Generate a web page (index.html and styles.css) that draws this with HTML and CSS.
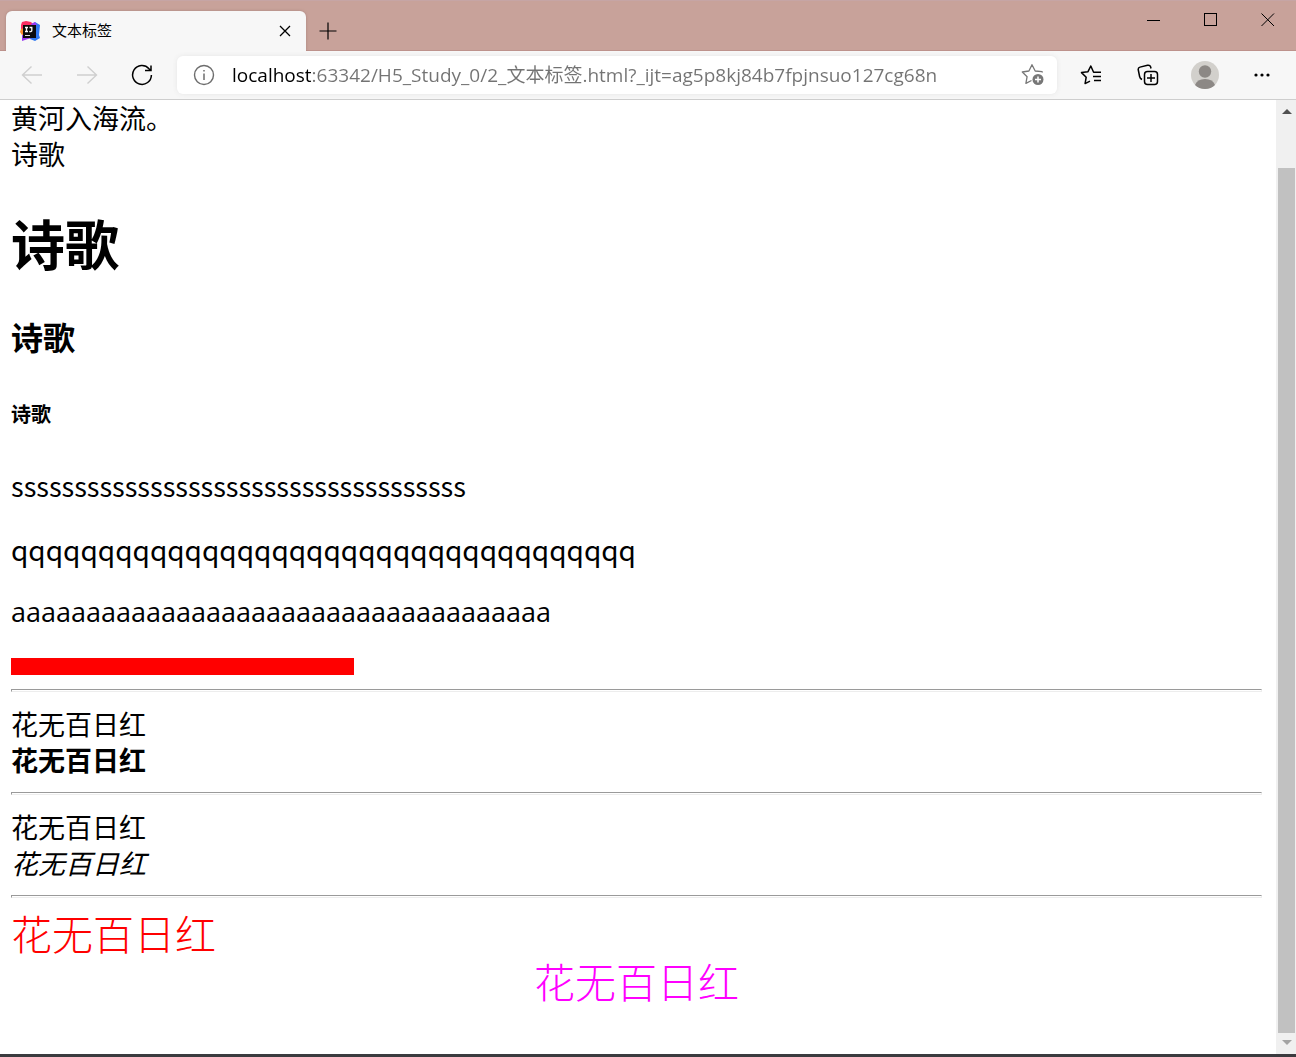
FILE: index.html
```html
<!DOCTYPE html>
<html lang="zh-CN">
<head>
  <meta charset="UTF-8">
  <meta name="viewport" content="width=device-width, initial-scale=1.0">
  <title>文本标签</title>
  <link rel="stylesheet" href="styles.css">
</head>
<body>
  <header class="titlebar">
    <div class="tab">
      <svg class="favicon" width="20" height="20" viewBox="0 0 20 20">
        <path fill="#fc2d61" d="M2 1 L6 0 L11 1 L13 3 L10 10 L1 8 L1 4 Z"/>
        <path fill="#fb8a2b" d="M1 8 L4 7 L5 13 L2 14 L0 11 Z"/>
        <path fill="#3079f0" d="M12 3 L15 1 L20 4 L19 14 L20 17 L15 20 L10 18 Z"/>
        <path fill="#9a3cf0" d="M11 3 L15 1 L17 4 L12 6 Z M2 14 L8 15 L12 17 L8 18 L2 20 Z"/>
        <rect x="3" y="4" width="13" height="13" fill="#0b0b0b"/>
        <path fill="none" stroke="#fff" stroke-width="1.3" d="M5 6.5 h3 M6.5 6.5 v4 M5 10.500 h3 M9.500 6.500 h2.300 v3 q0 1.300 -2.500 1"/>
        <path stroke="#ddd" d="M5 14.500 h5"/>
      </svg>
      <span class="tab-title">文本标签</span>
      <button class="tab-close" aria-label="关闭标签页">
        <svg width="12" height="12" viewBox="0 0 12 12"><path d="M1 1 L11 11 M11 1 L1 11" stroke-width="1.3"/></svg>
      </button>
    </div>
    <button class="new-tab" aria-label="新建标签页">
      <svg width="18" height="18" viewBox="0 0 18 18"><path d="M9 0.500 V17.500 M0.500 9 H17.500" stroke-width="1.2"/></svg>
    </button>
    <div class="window-buttons">
      <button aria-label="最小化">
        <svg width="14" height="14" viewBox="0 0 14 14"><path d="M0 7.500 H13"/></svg>
      </button>
      <button aria-label="最大化">
        <svg width="14" height="14" viewBox="0 0 14 14"><rect x="0.500" y="0.500" width="12" height="12"/></svg>
      </button>
      <button aria-label="关闭">
        <svg width="14" height="14" viewBox="0 0 14 14"><path d="M0.500 0.500 L13 13 M13 0.500 L0.500 13"/></svg>
      </button>
    </div>
  </header>

  <nav class="toolbar">
    <div class="nav-buttons">
      <button class="off" aria-label="后退">
        <svg width="22" height="20" viewBox="0 0 22 20"><path d="M21 10 H1.500 M10.500 1.500 L1.500 10 L10.500 18.500" stroke-width="1.4"/></svg>
      </button>
      <button class="off" aria-label="前进">
        <svg width="22" height="20" viewBox="0 0 22 20"><path d="M1 10 H20.500 M11.500 1.500 L20.500 10 L11.500 18.500" stroke-width="1.4"/></svg>
      </button>
      <button aria-label="刷新">
        <svg width="22" height="22" viewBox="0 0 22 22"><path d="M20.400 11 A9.400 9.400 0 1 1 18 4.700 L19.500 6.200 M20 1.500 V6.500 H14" stroke-width="1.5"/></svg>
      </button>
    </div>
    <div class="address">
      <svg class="info" width="22" height="22" viewBox="0 0 22 22"><circle cx="11" cy="11" r="9.500" stroke-width="1.4"/><path d="M11 9.500 V16 M11 6 V7.500" stroke-width="1.5"/></svg>
      <input type="text" aria-label="地址" value="localhost:63342/H5_Study_0/2_文本标签.html?_ijt=ag5p8kj84b7fpjnsuo127cg68n">
      <button class="favorite" aria-label="添加到收藏夹">
        <svg width="24" height="24" viewBox="0 0 24 24">
          <path d="M21.500 9.500 L21 8.600 L14.200 8 L11 1.700 L7.900 8 L1.300 9 L6.100 13.700 L4.900 20.300 L10.500 17.500" stroke-width="1.3" stroke-linejoin="round"/>
          <circle class="plus-dot" cx="17" cy="16.500" r="5.500"/>
          <path class="plus" d="M17 13.500 V19.500 M14 16.500 H20"/>
        </svg>
      </button>
    </div>
    <div class="tools">
      <button aria-label="收藏夹">
        <svg width="22" height="22" viewBox="0 0 22 22"><path d="M21 8.200 H13.600 L10.800 2 L8 7.700 L1.500 8.600 L6.200 13.200 L5.100 19.600 L10 17.200 M13 12.500 H21 M14 16.500 H21" stroke-width="1.5" stroke-linejoin="round"/></svg>
      </button>
      <button aria-label="集锦">
        <svg width="22" height="22" viewBox="0 0 22 22"><path d="M5 15.500 Q3 14.500 2.600 12.500 L1.300 6 Q0.800 3.800 3 3.100 L10.500 1.300 Q13 0.800 13.700 3 L14 4.500" stroke-width="1.5"/><rect x="7.500" y="7.500" width="13" height="13" rx="3" stroke-width="1.5"/><path d="M14 10 V18 M10 14 H18" stroke-width="1.5"/></svg>
      </button>
      <button aria-label="个人资料">
        <svg width="28" height="28" viewBox="0 0 28 28"><circle class="avatar-bg" cx="14" cy="14" r="14"/><circle class="avatar" cx="14" cy="10.500" r="6.200"/><path class="avatar" d="M4 24 Q6 18 14 18 Q22 18 24 24 Q20 28 14 28 Q8 28 4 24 Z"/></svg>
      </button>
      <button aria-label="设置及其他">
        <svg width="18" height="18" viewBox="0 0 18 18"><circle class="dot" cx="3" cy="9" r="1.600"/><circle class="dot" cx="9" cy="9" r="1.600"/><circle class="dot" cx="15" cy="9" r="1.600"/></svg>
      </button>
    </div>
  </nav>

  <div class="viewport">
    <main class="page">
      <div>黄河入海流。</div>
      <div>诗歌</div>
      <h1>诗歌</h1>
      <h3>诗歌</h3>
      <h5>诗歌</h5>
      <p>ssssssssssssssssssssssssssssssssssss</p>
      <p class="large">qqqqqqqqqqqqqqqqqqqqqqqqqqqqqqqqqqqq</p>
      <p class="narrow">aaaaaaaaaaaaaaaaaaaaaaaaaaaaaaaaaaaa</p>
      <hr class="red-line">
      <hr>
      <div>花无百日红</div>
      <b>花无百日红</b>
      <hr>
      <div>花无百日红</div>
      <i>花无百日红</i>
      <hr>
      <div class="kai">花无百日红</div>
      <div class="song">花无百日红</div>
    </main>
    <div class="scrollbar">
      <svg width="10" height="5" viewBox="0 0 10 5"><path fill="#505050" d="M5 0 L10 5 H0 Z"/></svg>
      <div class="thumb"></div>
      <svg width="10" height="5" viewBox="0 0 10 5"><path fill="#a3a3a3" d="M0 0 H10 L5 5 Z"/></svg>
    </div>
  </div>
</body>
</html>
```
FILE: styles.css
```css
* {
  box-sizing: border-box;
}
body {
  margin: 0;
  min-height: 100vh;
  display: flex;
  flex-direction: column;
  background-color: white;
  border-bottom: 3px solid #3b3b3f;
  font-family: "Noto Sans CJK SC", sans-serif;
  color: black;
}
button {
  display: flex;
  align-items: center;
  justify-content: center;
  padding: 0;
  border: none;
  background: none;
}
svg {
  display: block;
  flex-shrink: 0;
}
button svg,
.info {
  fill: none;
  stroke: black;
}

/* title bar */
.titlebar {
  display: flex;
  flex-shrink: 0;
  height: 51px;
  padding-left: 6px;
  background-color: #c8a29a;
  border-top: 1px solid #c6a5a5;
  box-shadow: inset 0 -1px #bd928c;
}
.tab {
  display: flex;
  align-items: center;
  width: 300px;
  height: 40px;
  margin-top: 10px;
  padding: 0 12px 0 14px;
  background-color: #f7f7f7;
  border-radius: 6px 6px 0 0;
  box-shadow: 0 0 3px #a8827c;
}
.tab-title {
  flex: 1;
  margin-left: 12px;
  padding-bottom: 4px;
  font-size: 15px;
}
.tab-close {
  width: 18px;
  height: 18px;
}
.new-tab {
  width: 44px;
  height: 40px;
  margin-top: 10px;
}
.window-buttons {
  display: flex;
  margin-left: auto;
}
.window-buttons button {
  width: 57px;
  height: 38px;
}

/* toolbar */
.toolbar {
  display: flex;
  align-items: center;
  flex-shrink: 0;
  height: 49px;
  background-color: #f7f7f7;
  border-bottom: 1px solid #cecece;
}
.nav-buttons {
  display: flex;
  width: 177px;
  padding-left: 4px;
}
.nav-buttons button {
  width: 55px;
  height: 40px;
}
.off svg {
  stroke: #cfcfcf;
}
.address {
  display: flex;
  align-items: center;
  flex: 1;
  height: 38px;
  padding: 0 12px 0 16px;
  background-color: white;
  border-radius: 6px;
  box-shadow: 0 0 5px #e6e6e6;
}
.info {
  stroke: #6d6d6d;
}
/* host name in black, the rest of the address in grey */
.address input {
  flex: 1;
  min-width: 0;
  height: 34px;
  margin-left: 17px;
  padding: 0 0 2px;
  border: none;
  outline: none;
  font-family: "Open Sans", "Noto Sans CJK SC", sans-serif;
  font-size: 19px;
  color: transparent;
  background: linear-gradient(to right, black 79px, #737373 79px);
  background-clip: text;
  -webkit-background-clip: text;
}
.favorite svg {
  stroke: #777;
}
.favorite .plus-dot {
  fill: #777;
  stroke: none;
}
.favorite .plus {
  stroke: white;
  stroke-width: 1.5px;
}
.tools {
  display: flex;
  padding: 0 6px 0 5px;
}
.tools button {
  width: 57px;
  height: 40px;
}
.avatar-bg {
  fill: #d2d0cc;
  stroke: none;
}
.avatar {
  fill: #8c8885;
  stroke: none;
}
.dot {
  fill: black;
  stroke: none;
}

/* document */
.viewport {
  display: flex;
  flex: 1;
}
.page {
  flex: 1;
  padding: 0 14px 0 11px;
  font-size: 27px;
  line-height: 36px;
}
h1 {
  margin: 36px 0;
  font-size: 54px;
  line-height: 70px;
}
h3 {
  margin: 32px 0 42px;
  font-size: 32px;
  line-height: 44px;
}
h5 {
  margin: 40px 0;
  font-size: 20px;
  line-height: 28px;
}
p {
  margin: 27px 0;
}
.large {
  font-size: 28px;
}
.narrow {
  font-family: "Open Sans", sans-serif;
}
hr {
  margin: 14px 0;
  border: 1px solid #ededed;
  border-top-color: #9a9a9a;
  border-left-color: #9a9a9a;
  height: 3px;
}
.red-line {
  width: 343px;
  height: 17px;
  margin: 28px 0 14px;
  border: none;
  background-color: red;
}
b,
i {
  display: block;
}
.kai {
  font-family: KaiTi, "Noto Sans CJK SC", sans-serif;
  font-size: 41px;
  font-weight: 300;
  line-height: 40px;
  color: red;
}
.song {
  font-family: FangSong, "Noto Sans CJK SC", sans-serif;
  font-size: 41px;
  font-weight: 300;
  line-height: 56px;
  text-align: center;
  color: magenta;
}

/* scrollbar */
.scrollbar {
  display: flex;
  flex-direction: column;
  align-items: center;
  width: 20px;
  padding: 9px 1px 9px 2px;
  background-color: #f0f0f0;
}
.thumb {
  flex: 1;
  width: 17px;
  margin: 54px 0 7px;
  background-color: #c1c1c1;
}
```
